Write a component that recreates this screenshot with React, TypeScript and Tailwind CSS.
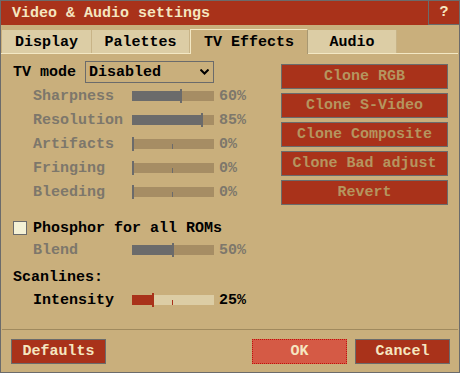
import React from 'react'

// ─── Slider ───────────────────────────────────────────────────────────
function Slider({ value, enabled }: { value: number; enabled: boolean }) {
  const fill = Math.round((82 * value) / 100)
  return (
    <div className="relative h-[14px] w-[82px] shrink-0">
      <div className={`absolute left-0 top-[2px] h-[10px] w-[82px] ${enabled ? 'bg-[#dccda5]' : 'bg-[#a68d64]'}`} />
      <div
        className={`absolute left-0 top-[2px] h-[10px] ${enabled ? 'bg-[#a9321a]' : 'bg-[#6b6b6b]'}`}
        style={{ width: fill }}
      />
      <div className={`absolute left-[40px] top-[7px] h-[5px] w-[1px] ${enabled ? 'bg-[#a9321a]' : 'bg-[#6b6b6b]'}`} />
      <div
        className={`absolute top-0 h-[14px] w-[2px] ${enabled ? 'bg-[#a9321a]' : 'bg-[#6b6b6b]'}`}
        style={{ left: Math.max(0, fill - 1) }}
      />
    </div>
  )
}

function SliderRow({
  label, value, enabled, h = 'h-[24px]',
}: { label: string; value: number; enabled: boolean; h?: string }) {
  const color = enabled ? 'text-black' : 'text-[#7d776b]'
  return (
    <div className={`flex items-center ${h}`}>
      <span className={`w-[119px] shrink-0 pl-[20px] ${color}`}>{label}</span>
      <Slider value={value} enabled={enabled} />
      <span className={`ml-[5px] ${color}`}>{value}%</span>
    </div>
  )
}

function CloneButton({ label }: { label: string }) {
  return (
    <div className="flex h-[25px] w-[167px] items-center justify-center border border-[#6b6b6b] bg-[#a9321a] text-[#b5955f]">
      {label}
    </div>
  )
}

const tabs = [
  { name: 'Display', w: 'w-[90px]', active: false },
  { name: 'Palettes', w: 'w-[98px]', active: false },
  { name: 'TV Effects', w: 'w-[118px]', active: true },
  { name: 'Audio', w: 'w-[89px]', active: false },
]

export default function App() {
  return (
    <div className="flex h-[373px] w-[460px] flex-col border border-[#6b6b6b] bg-[#c9af7c] font-['Liberation_Mono',monospace] text-[15px] font-bold leading-[17px] text-black">

      {/* ─── Title bar ─────────────────────────────────────────── */}
      <div className="flex h-[24px] shrink-0 bg-[#a9321a] text-[#f5e6c0]">
        <span className="flex-1 pl-[11px] pt-[4px]">Video &amp; Audio settings</span>
        <div className="flex h-[24px] w-[31px] items-center justify-center border-b border-l border-[#6b6b6b]">?</div>
      </div>

      {/* ─── Tabs ──────────────────────────────────────────────── */}
      <div className="mr-[1px] flex h-[29px] shrink-0 items-end border-b border-[#f3e8c4] pl-[1px]">
        {tabs.map((t) =>
          t.active ? (
            <div
              key={t.name}
              className={`${t.w} mb-[-1px] flex h-[25px] items-center justify-center border-l border-r border-t border-l-[#f3e8c4] border-t-[#f3e8c4] border-r-[#a89872] bg-[#c9af7c]`}
            >
              {t.name}
            </div>
          ) : (
            <div
              key={t.name}
              className={`${t.w} flex h-[23px] items-center justify-center border-r border-[#c8b487] bg-[#dccda5] pt-[2px]`}
            >
              {t.name}
            </div>
          ),
        )}
      </div>

      {/* ─── Content ───────────────────────────────────────────── */}
      <div className="flex flex-1 pl-[12px]">
        <div className="flex w-[268px] flex-col pt-[7px]">
          <div className="flex h-[22px] items-center">
            <span className="w-[72px]">TV mode</span>
            <div className="flex h-[22px] w-[129px] items-center justify-between border border-[#6b6b6b] pl-[3px] pr-[4px]">
              <span>Disabled</span>
              <svg width="9" height="6" viewBox="0 0 9 6">
                <path d="M0.5 0.5 L4.5 4.5 L8.5 0.5" stroke="#000" strokeWidth="2" fill="none" />
              </svg>
            </div>
          </div>

          <div className="mt-[1px] flex flex-col">
            <SliderRow label="Sharpness" value={60} enabled={false} />
            <SliderRow label="Resolution" value={85} enabled={false} />
            <SliderRow label="Artifacts" value={0} enabled={false} />
            <SliderRow label="Fringing" value={0} enabled={false} />
            <SliderRow label="Bleeding" value={0} enabled={false} />
          </div>

          <div className="mt-[13px] flex h-[22px] items-center">
            <div className="mr-[6px] h-[14px] w-[14px] border border-[#6b6b6b] bg-[#f4f1d6]" />
            <span>Phosphor for all ROMs</span>
          </div>
          <SliderRow label="Blend" value={50} enabled={false} h="h-[22px]" />

          <div className="mt-[5px] flex h-[22px] items-center">Scanlines:</div>
          <div className="mt-[1px]">
            <SliderRow label="Intensity" value={25} enabled={true} h="h-[22px]" />
          </div>
        </div>

        <div className="flex flex-col gap-[4px] pt-[10px]">
          <CloneButton label="Clone RGB" />
          <CloneButton label="Clone S-Video" />
          <CloneButton label="Clone Composite" />
          <CloneButton label="Clone Bad adjust" />
          <CloneButton label="Revert" />
        </div>
      </div>

      {/* ─── Footer ────────────────────────────────────────────── */}
      <div className="mx-[1px] h-[1px] shrink-0 bg-[#a08a5e]" />
      <div className="flex h-[42px] shrink-0 items-start pl-[10px] pr-[9px] pt-[9px] text-[#f5e6c0]">
        <div className="flex h-[25px] w-[95px] items-center justify-center border border-[#6b6b6b] bg-[#a9321a]">Defaults</div>
        <div className="flex-1" />
        <div className="flex h-[25px] w-[95px] items-center justify-center border border-dotted border-[#c0120c] bg-[#d55a45]">OK</div>
        <div className="ml-[8px] flex h-[25px] w-[95px] items-center justify-center border border-[#6b6b6b] bg-[#a9321a]">Cancel</div>
      </div>
    </div>
  )
}
